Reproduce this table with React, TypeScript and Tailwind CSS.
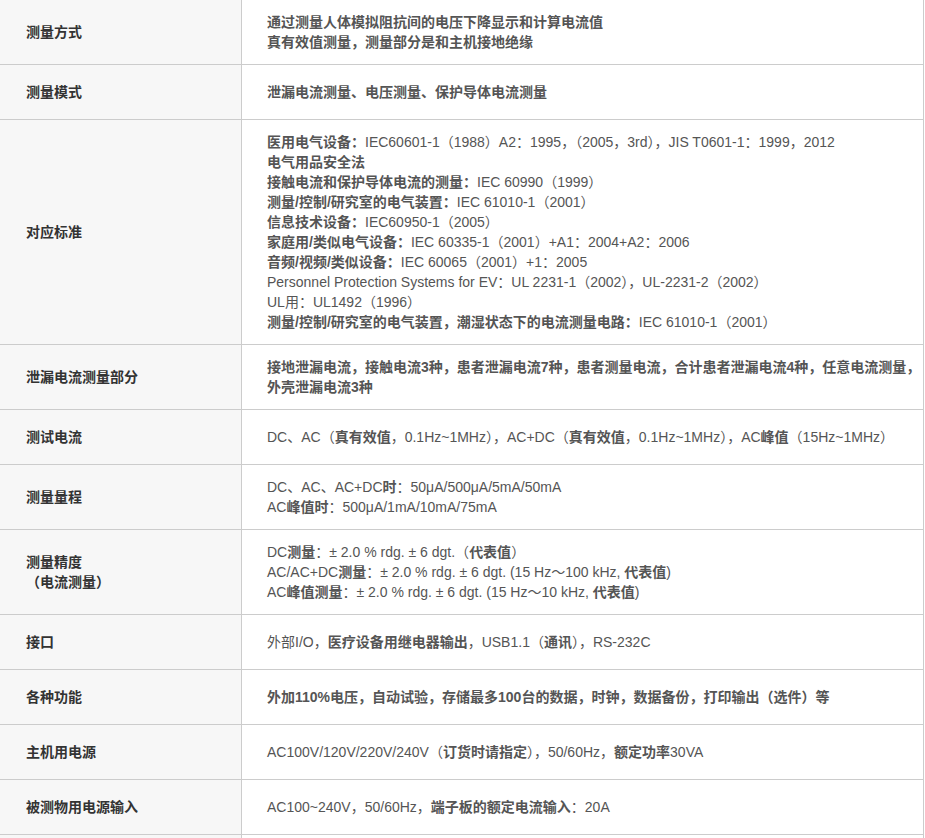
import type { ReactNode } from "react";

const B = ({ children }: { children: ReactNode }) => <b className="font-bold">{children}</b>;

interface SpecRow {
  label: ReactNode;
  lines: ReactNode[];
}

const ROWS: SpecRow[] = [
  {
    label: "测量方式",
    lines: [
      <B>通过测量人体模拟阻抗间的电压下降显示和计算电流值</B>,
      <B>真有效值测量，测量部分是和主机接地绝缘</B>,
    ],
  },
  {
    label: "测量模式",
    lines: [<B>泄漏电流测量、电压测量、保护导体电流测量</B>],
  },
  {
    label: "对应标准",
    lines: [
      <><B>医用电气设备：</B>IEC60601-1（1988）A2：1995，（2005，3rd），JIS T0601-1：1999，2012</>,
      <B>电气用品安全法</B>,
      <><B>接触电流和保护导体电流的测量：</B>IEC 60990（1999）</>,
      <><B>测量/控制/研究室的电气装置：</B>IEC 61010-1（2001）</>,
      <><B>信息技术设备：</B>IEC60950-1（2005）</>,
      <><B>家庭用/类似电气设备：</B>IEC 60335-1（2001）+A1：2004+A2：2006</>,
      <><B>音频/视频/类似设备：</B>IEC 60065（2001）+1：2005</>,
      <>Personnel Protection Systems for EV：UL 2231-1（2002），UL-2231-2（2002）</>,
      <>UL用：UL1492（1996）</>,
      <><B>测量/控制/研究室的电气装置，潮湿状态下的电流测量电路：</B>IEC 61010-1（2001）</>,
    ],
  },
  {
    label: "泄漏电流测量部分",
    lines: [
      <B>接地泄漏电流，接触电流3种，患者泄漏电流7种，患者测量电流，合计患者泄漏电流4种，任意电流测量，</B>,
      <B>外壳泄漏电流3种</B>,
    ],
  },
  {
    label: "测试电流",
    lines: [
      <>DC、AC（<B>真有效值</B>，0.1Hz~1MHz），AC+DC（<B>真有效值</B>，0.1Hz~1MHz），AC<B>峰值</B>（15Hz~1MHz）</>,
    ],
  },
  {
    label: "测量量程",
    lines: [
      <>DC、AC、AC+DC<B>时</B>：50μA/500μA/5mA/50mA</>,
      <>AC<B>峰值时</B>：500μA/1mA/10mA/75mA</>,
    ],
  },
  {
    label: (
      <>
        测量精度
        <br />
        （电流测量）
      </>
    ),
    lines: [
      <>DC<B>测量</B>：± 2.0 % rdg. ± 6 dgt.（<B>代表值</B>）</>,
      <>AC/AC+DC<B>测量</B>：± 2.0 % rdg. ± 6 dgt. (15 Hz～100 kHz, <B>代表值</B>)</>,
      <>AC<B>峰值测量</B>：± 2.0 % rdg. ± 6 dgt. (15 Hz～10 kHz, <B>代表值</B>)</>,
    ],
  },
  {
    label: "接口",
    lines: [<>外部I/O，<B>医疗设备用继电器输出</B>，USB1.1（<B>通讯</B>），RS-232C</>],
  },
  {
    label: "各种功能",
    lines: [<B>外加110%电压，自动试验，存储最多100台的数据，时钟，数据备份，打印输出（选件）等</B>],
  },
  {
    label: "主机用电源",
    lines: [<>AC100V/120V/220V/240V（<B>订货时请指定</B>），50/60Hz，<B>额定功率</B>30VA</>],
  },
  {
    label: "被测物用电源输入",
    lines: [<>AC100~240V，50/60Hz，<B>端子板的额定电流输入</B>：20A</>],
  },
  {
    label: "",
    lines: [""],
  },
];

export default function App() {
  return (
    <div className="min-h-screen bg-white font-['Liberation_Sans','Noto_Sans_CJK_SC',sans-serif] text-[14px] leading-5">
      <div className="w-[924px] border-r border-[#cccccc]">
        {ROWS.map((row, i) => (
          <div key={i} className="grid grid-cols-[242px_1fr] border-b border-[#cccccc]">
            <div className="flex min-h-[54px] items-center border-r border-[#cccccc] bg-[#f7f7f7] py-3 pl-[26px] font-bold text-[#333333]">
              <div>{row.label}</div>
            </div>
            <div className="flex min-h-[54px] items-center py-3 pl-[25px] text-[#555555]">
              <div>
                {row.lines.map((line, j) => (
                  <div key={j} className="whitespace-nowrap">
                    {line}
                  </div>
                ))}
              </div>
            </div>
          </div>
        ))}
      </div>
    </div>
  );
}
